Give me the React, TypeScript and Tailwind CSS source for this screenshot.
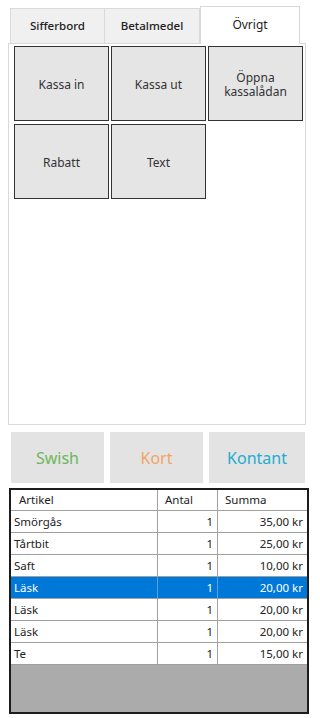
import React from "react";

type Row = { name: string; qty: number; sum: string };

const rows: Row[] = [
  { name: "Smörgås", qty: 1, sum: "35,00 kr" },
  { name: "Tårtbit", qty: 1, sum: "25,00 kr" },
  { name: "Saft", qty: 1, sum: "10,00 kr" },
  { name: "Läsk", qty: 1, sum: "20,00 kr" },
  { name: "Läsk", qty: 1, sum: "20,00 kr" },
  { name: "Läsk", qty: 1, sum: "20,00 kr" },
  { name: "Te", qty: 1, sum: "15,00 kr" },
];

const SELECTED = 3;

const actions = ["Kassa in", "Kassa ut", "Öppna kassalådan", "Rabatt", "Text"];

export default function App() {
  return (
    <div className="w-[314px] h-[718px] bg-white pt-[6px] font-['Noto_Sans',sans-serif] text-[#222] overflow-hidden">
      {/* tabs */}
      <div className="flex items-end h-[37px] pl-[10px]">
        <div className="w-[95px] h-[35px] flex items-center justify-center bg-[#f0f0f0] border border-b-0 border-[#d9d9d9] text-[11.5px] font-medium">
          Sifferbord
        </div>
        <div className="w-[95px] h-[35px] flex items-center justify-center bg-[#f0f0f0] border border-l-0 border-b-0 border-[#d9d9d9] text-[11.5px] font-medium">
          Betalmedel
        </div>
        <div className="relative z-10 -mb-px w-[100px] h-[38px] flex items-center justify-center bg-white border border-b-0 border-[#d9d9d9] text-[12px] pb-[2px]">
          Övrigt
        </div>
      </div>

      {/* panel */}
      <div className="ml-[8px] w-[298px] h-[382px] border border-[#d9d9d9] bg-white pl-[5px] pt-[2px]">
        <div className="grid grid-cols-[95px_95px_95px] auto-rows-[75px] gap-x-[2px] gap-y-[3px]">
          {actions.map((a) => (
            <button
              key={a}
              className="bg-[#e5e5e5] border-[1.5px] border-[#333] text-[12px] leading-[14px] text-[#333] px-2 pt-[2px]"
            >
              {a}
            </button>
          ))}
        </div>
      </div>

      {/* payment */}
      <div className="flex gap-[6px] pl-[11px] mt-[7px]">
        <button className="w-[93px] h-[51px] bg-[#e3e3e3] text-[16px] text-[#6cb85a]">Swish</button>
        <button className="w-[93px] h-[51px] bg-[#e3e3e3] text-[16px] text-[#f2a465]">Kort</button>
        <button className="w-[96px] h-[51px] bg-[#e3e3e3] text-[16px] text-[#22acd0]">Kontant</button>
      </div>

      {/* receipt grid */}
      <div className="ml-[9px] mt-[5px] w-[300px] h-[226px] border-2 border-[#1c1c1c] bg-[#ababab] flex flex-col text-[11.5px]">
        <div className="flex h-[21px] bg-white border-b border-[#a0a0a0] shrink-0">
          <div className="w-[147px] pl-[8px] flex items-center border-r border-[#a0a0a0]">Artikel</div>
          <div className="w-[60px] pl-[7px] flex items-center border-r border-[#a0a0a0]">Antal</div>
          <div className="flex-1 pl-[7px] flex items-center">Summa</div>
        </div>
        {rows.map((r, i) => {
          const sel = i === SELECTED;
          return (
            <div
              key={i}
              className={
                sel
                  ? "flex h-[22px] bg-[#0078d7] text-white border-b border-[#a0a0a0] shrink-0"
                  : "flex h-[22px] bg-white border-b border-[#a0a0a0] shrink-0"
              }
            >
              <div className={sel ? "w-[147px] pl-[3px] flex items-center border-r border-[#5aa0e0]" : "w-[147px] pl-[3px] flex items-center border-r border-[#a0a0a0]"}>
                {r.name}
              </div>
              <div className={sel ? "w-[60px] pr-[4px] flex items-center justify-end border-r border-[#5aa0e0]" : "w-[60px] pr-[4px] flex items-center justify-end border-r border-[#a0a0a0]"}>
                {r.qty}
              </div>
              <div className="flex-1 pr-[4px] flex items-center justify-end">{r.sum}</div>
            </div>
          );
        })}
      </div>
    </div>
  );
}
